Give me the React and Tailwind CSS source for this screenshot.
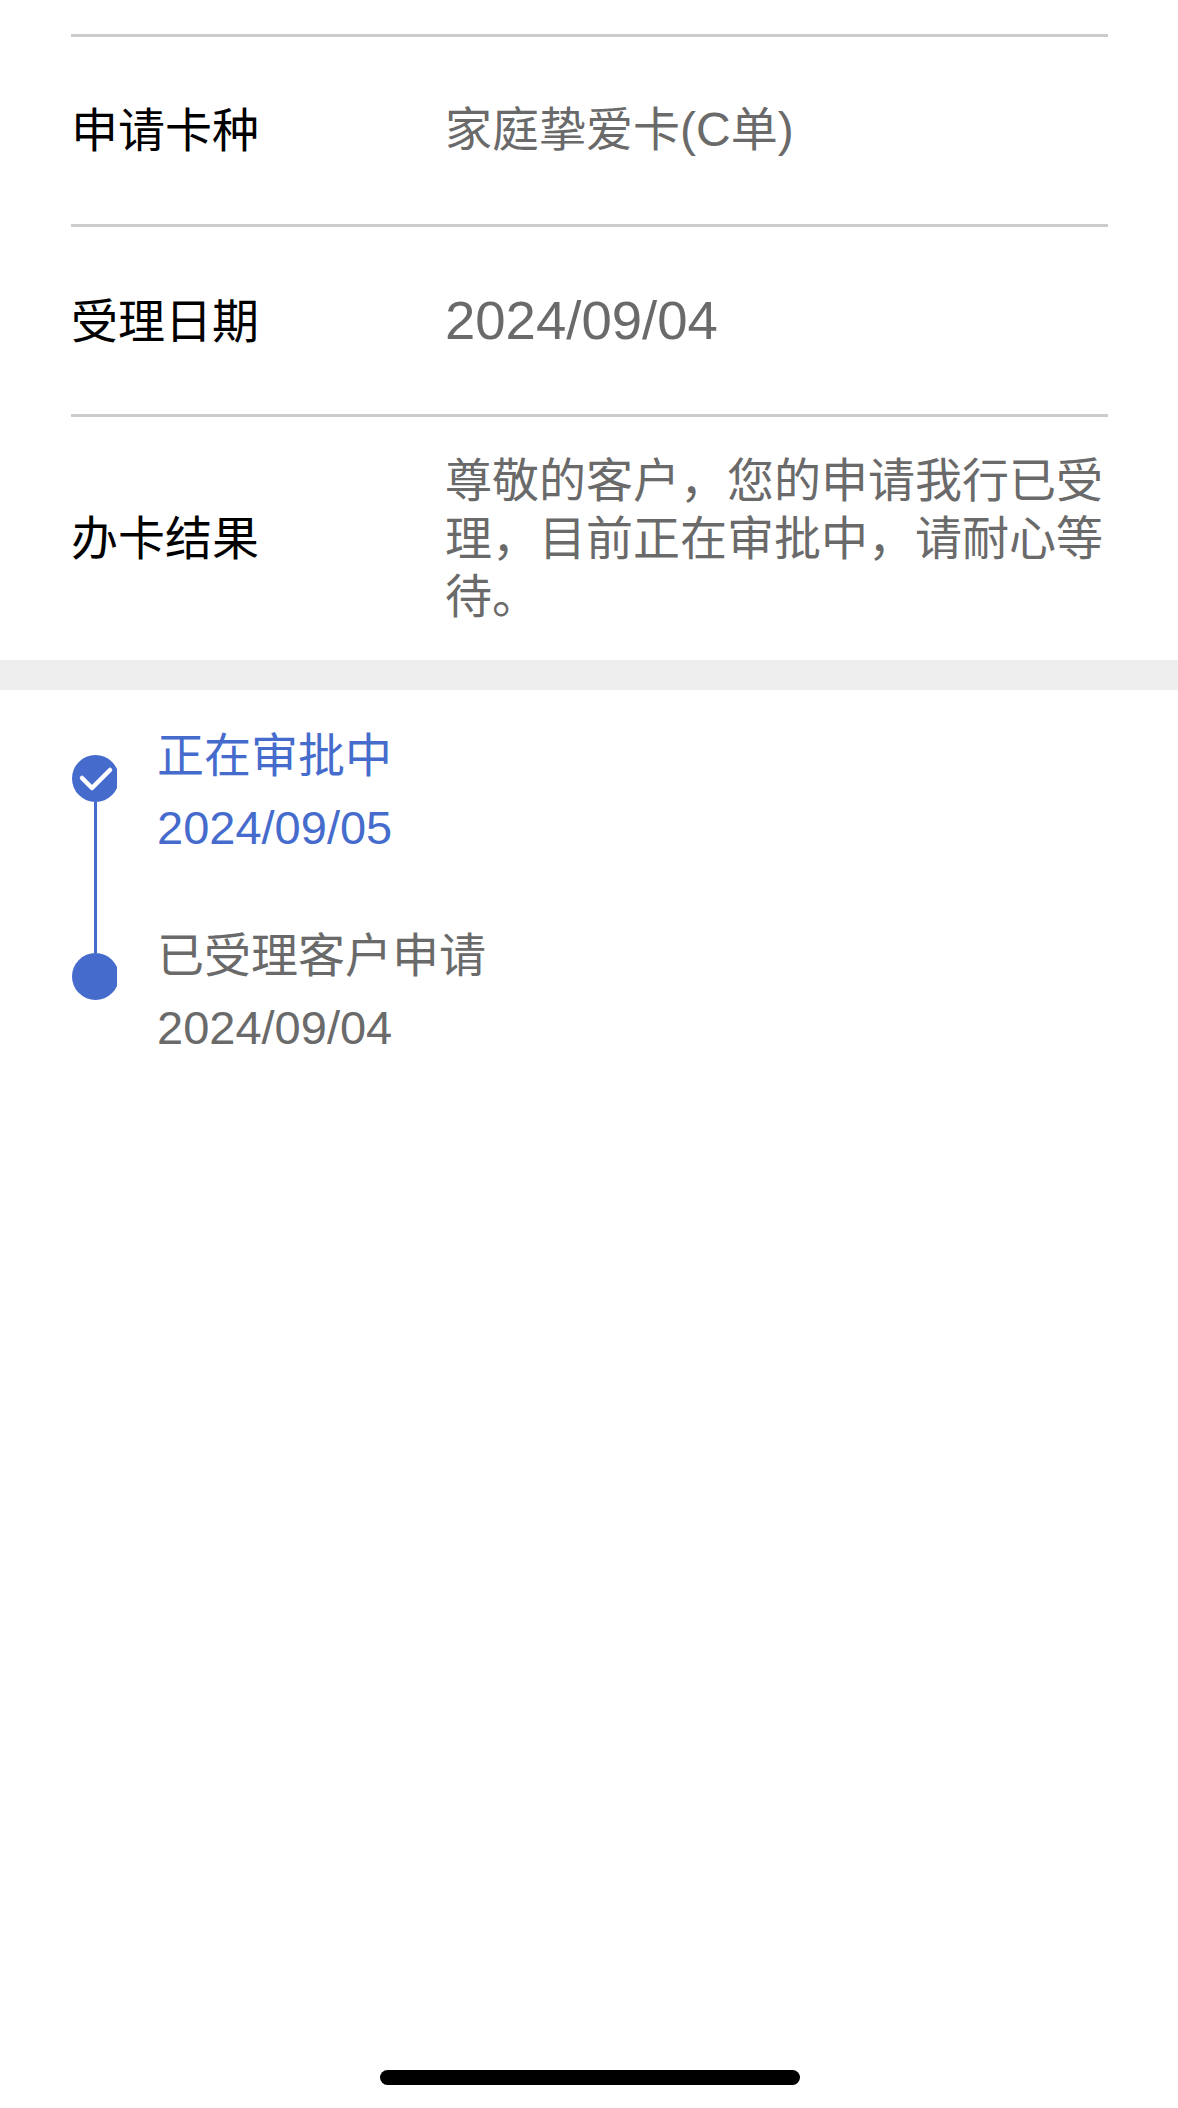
const F = '"Liberation Sans","Noto Sans CJK SC",sans-serif';

function Row({ label, children, className }) {
  return (
    <div className={`flex items-center border-t-[3px] border-[#cccccc] ${className}`}>
      <div className="w-[374px] shrink-0 text-[47px] leading-[58px] text-black">{label}</div>
      <div className="flex-1 text-[47px] leading-[58px] text-[#6a6a6a]">{children}</div>
    </div>
  );
}

function Dot({ checked }) {
  return (
    <svg width="45" height="47" viewBox="0 0 45 47" className="block shrink-0">
      <circle cx="23.5" cy="23.5" r="23.5" fill="#456ccd" />
      {checked && <path d="M10 23 L20 33 L38 15" fill="none" stroke="#ffffff" strokeWidth="4.5" strokeLinecap="round" strokeLinejoin="round" />}
    </svg>
  );
}

export default function App() {
  return (
    <div className="flex h-[2108px] w-full flex-col bg-white pt-[34px]" style={{ fontFamily: F }}>
      <div className="ml-[71px] mr-[70px]">
        <Row label="申请卡种" className="h-[190px]">
          <div className="-translate-y-[1px]">家庭挚爱卡<span className="text-[48px]">(C</span>单<span className="text-[48px]">)</span></div>
        </Row>
        <Row label="受理日期" className="h-[190px] pt-[2px]">
          <span className="text-[54.5px]">2024/09/04</span>
        </Row>
        <Row label="办卡结果" className="h-[246px]">
          <div className="w-[664px]">尊敬的客户，您的申请我行已受理，目前正在审批中，请耐心等待。</div>
        </Row>
      </div>
      <div className="h-[30px] bg-[#eeeeee]" />
      <div className="ml-[72px] mt-[37px] flex">
        <div className="mt-[28px] flex h-[245px] w-[45px] flex-col">
          <Dot checked />
          <div className="ml-[22px] w-[3px] flex-1 bg-[#456ccd]" />
          <Dot />
        </div>
        <div className="ml-[40px]">
          <div className="text-[47px] leading-[58px] text-[#456ccd]">正在审批中</div>
          <div className="mt-[16px] text-[47px] leading-[54px] text-[#456ccd]">2024/09/05</div>
          <div className="mt-[72px] text-[47px] leading-[58px] text-[#6a6a6a]">已受理客户申请</div>
          <div className="mt-[16px] text-[47px] leading-[54px] text-[#6a6a6a]">2024/09/04</div>
        </div>
      </div>
      <div className="mt-auto mb-[23px] ml-[1px] h-[15px] w-[420px] self-center rounded-full bg-black" />
    </div>
  );
}
